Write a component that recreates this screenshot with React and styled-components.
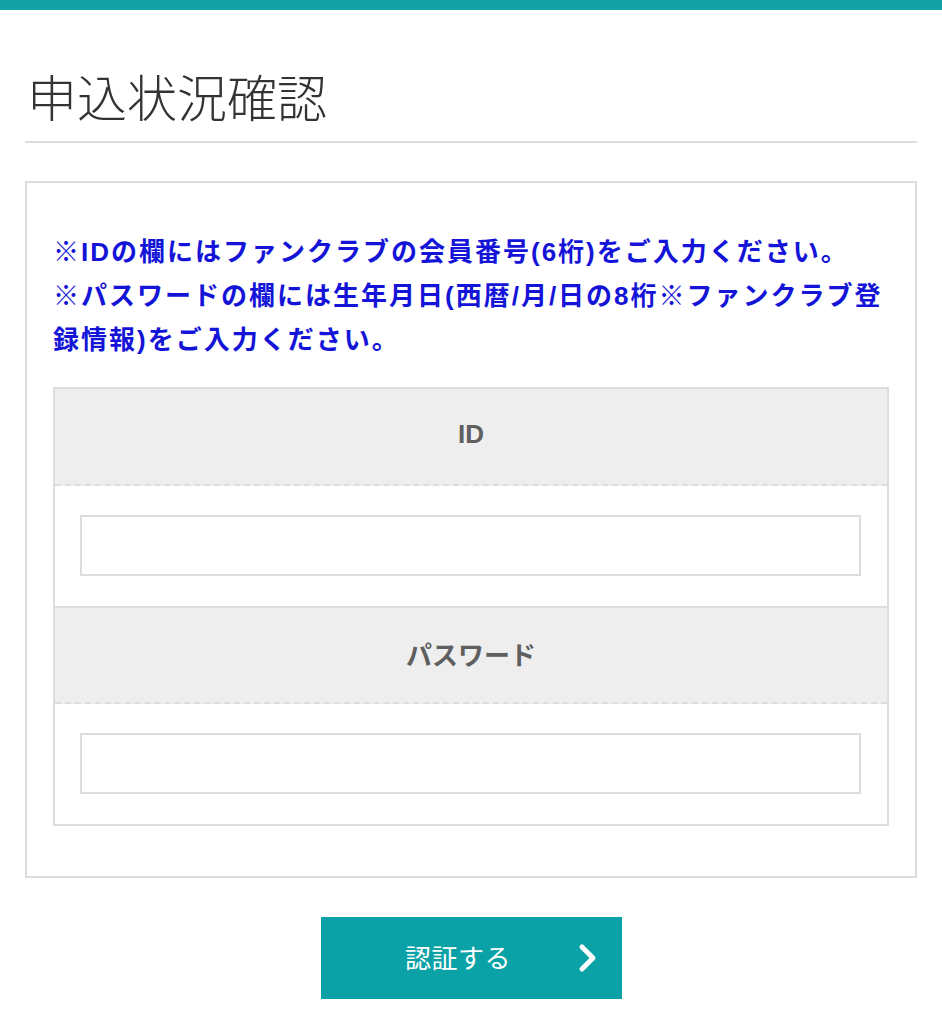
import React, { useState } from "react";
import styled, { createGlobalStyle } from "styled-components";

const GlobalStyle = createGlobalStyle`
  html, body {
    margin: 0;
    padding: 0;
    background: #fff;
  }
  body {
    font-family: "Liberation Sans", "Noto Sans CJK JP", sans-serif;
    color: #333;
  }
  * {
    box-sizing: border-box;
  }
`;

const TopBar = styled.div`
  height: 10px;
  background: #12a2a5;
`;

const Main = styled.main`
  padding: 0 25px 40px;
`;

const Title = styled.h1`
  margin: 60px 0 0;
  padding: 0 0 21px 2px;
  font-family: "Noto Sans CJK JP", sans-serif;
  font-weight: 300;
  font-size: 50px;
  line-height: 50px;
  color: #333;
  border-bottom: 2px solid #ddd;
`;

const Box = styled.form`
  margin-top: 38px;
  border: 2px solid #ddd;
  padding: 47px 26px 50px;
`;

const Notice = styled.p`
  margin: 0 0 25px;
  font-size: 26px;
  font-weight: bold;
  line-height: 44px;
  letter-spacing: 2px;
  color: #1414d8;
`;

const Line = styled.span`
  display: block;
  white-space: nowrap;
`;

const Table = styled.div`
  border: 2px solid #ddd;
`;

const HeadCell = styled.div`
  height: ${(p) => (p.first ? "97px" : "98px")};
  display: flex;
  align-items: center;
  justify-content: center;
  padding-bottom: 4px;
  background: #eee;
  border-top: ${(p) => (p.first ? "none" : "2px solid #ddd")};
  border-bottom: 2px dashed #ddd;
  font-size: 26px;
  font-weight: bold;
  color: #5f5f5f;
`;

const InputCell = styled.div`
  padding: 29px 26px 30px 25px;
`;

const TextInput = styled.input`
  display: block;
  width: 100%;
  height: 61px;
  border: 2px solid #ddd;
  border-radius: 0;
  outline: none;
  padding: 0 12px;
  font-size: 24px;
  font-family: inherit;
  background: #fff;
`;

const ButtonRow = styled.div`
  display: flex;
  justify-content: center;
  margin-top: 39px;
`;

const Submit = styled.button`
  position: relative;
  width: 301px;
  height: 82px;
  border: none;
  border-radius: 0;
  background: #0aa2a6;
  color: #fff;
  font-family: "Noto Sans CJK JP", sans-serif;
  font-size: 26px;
  font-weight: 400;
  letter-spacing: 0.5px;
  padding: 0 26px 4px 0;
  cursor: pointer;
`;

const Chevron = styled.svg`
  position: absolute;
  right: 24px;
  top: 50%;
  width: 20px;
  height: 30px;
  transform: translateY(-50%);
`;

const App = () => {
  const [id, setId] = useState("");
  const [password, setPassword] = useState("");

  const onSubmit = (event) => {
    event.preventDefault();
  };

  return (
    <>
      <GlobalStyle />
      <TopBar />
      <Main>
        <Title>申込状況確認</Title>
        <Box onSubmit={onSubmit}>
          <Notice>
            <Line>※IDの欄にはファンクラブの会員番号(6桁)をご入力ください。</Line>
            <Line>※パスワードの欄には生年月日(西暦/月/日の8桁※ファンクラブ登</Line>
            <Line>録情報)をご入力ください。</Line>
          </Notice>
          <Table>
            <HeadCell first>ID</HeadCell>
            <InputCell>
              <TextInput
                type="text"
                value={id}
                onChange={(e) => setId(e.target.value)}
              />
            </InputCell>
            <HeadCell>パスワード</HeadCell>
            <InputCell>
              <TextInput
                type="password"
                value={password}
                onChange={(e) => setPassword(e.target.value)}
              />
            </InputCell>
          </Table>
        </Box>
        <ButtonRow>
          <Submit type="submit">
            認証する
            <Chevron viewBox="0 0 20 30">
              <polyline
                points="4,4 15,15 4,26"
                fill="none"
                stroke="#fff"
                strokeWidth="5"
                strokeLinecap="round"
                strokeLinejoin="round"
              />
            </Chevron>
          </Submit>
        </ButtonRow>
      </Main>
    </>
  );
};

export default App;
